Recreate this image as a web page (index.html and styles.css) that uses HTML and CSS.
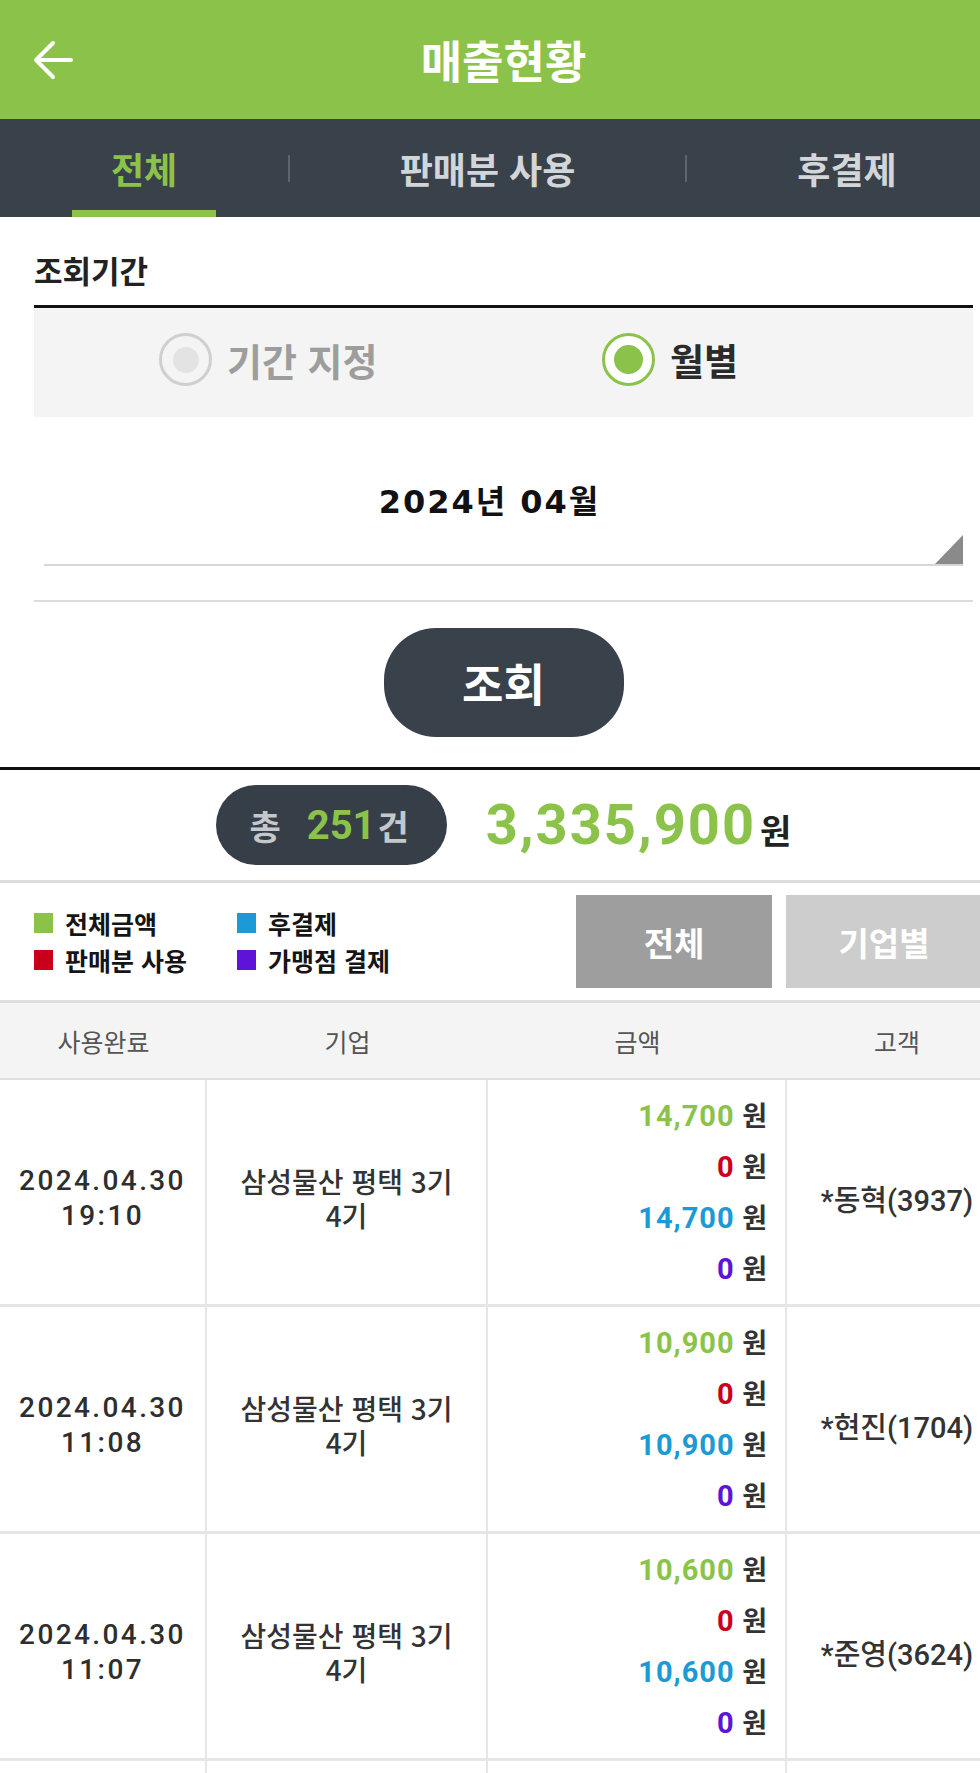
FILE: index.html
```html
<!DOCTYPE html>
<html lang="ko">
<head>
<meta charset="utf-8">
<title>매출현황</title>
<link rel="stylesheet" href="styles.css">
</head>
<body>
<div class="page">
  <header class="topbar">
    <svg class="back" viewBox="0 0 40 40" width="40" height="40" aria-hidden="true">
      <path d="M3 20H38M20 3L3 20L20 37" fill="none" stroke="#fff" stroke-width="4" stroke-linecap="round" stroke-linejoin="round"/>
    </svg>
    <h1 class="title">매출현황</h1>
    <span class="topbar-space"></span>
  </header>

  <nav class="tabs">
    <div class="tab tab-all active"><span class="tab-label">전체</span><span class="tab-bar"></span></div>
    <span class="tab-div"></span>
    <div class="tab tab-sale"><span class="tab-label">판매분 사용</span><span class="tab-bar"></span></div>
    <span class="tab-div"></span>
    <div class="tab tab-post"><span class="tab-label">후결제</span><span class="tab-bar"></span></div>
  </nav>

  <section class="search">
    <div class="search-label">조회기간</div>
    <div class="radio-box">
      <div class="opt opt-range"><span class="radio"><span class="dot"></span></span><span class="opt-text">기간 지정</span></div>
      <div class="opt opt-month on"><span class="radio"><span class="dot"></span></span><span class="opt-text">월별</span></div>
    </div>
    <div class="month-select"><span class="month-text">2024년 04월</span></div>
    <div class="sep"></div>
    <div class="btn-row"><button class="search-btn">조회</button></div>
  </section>

  <div class="rule-black"></div>

  <div class="summary">
    <div class="count-pill"><span class="pill-lbl">총</span><span class="pill-num">251</span><span class="pill-unit">건</span></div>
    <div class="total"><span class="total-num">3,335,900</span><span class="total-unit">원</span></div>
  </div>

  <div class="rule-gray"></div>

  <div class="legend-row">
    <div class="legend">
      <div class="lg"><span class="sq sq-green"></span>전체금액</div>
      <div class="lg"><span class="sq sq-blue"></span>후결제</div>
      <div class="lg"><span class="sq sq-red"></span>판매분 사용</div>
      <div class="lg"><span class="sq sq-purple"></span>가맹점 결제</div>
    </div>
    <div class="view-btns">
      <button class="vbtn vbtn-all">전체</button>
      <button class="vbtn vbtn-corp">기업별</button>
    </div>
  </div>

  <div class="table">
    <div class="thead">
      <div class="th">사용완료</div>
      <div class="th">기업</div>
      <div class="th">금액</div>
      <div class="th">고객</div>
    </div>

    <div class="tr">
      <div class="td td-date"><span>2024.04.30</span><span>19:10</span></div>
      <div class="td td-corp">삼성물산 평택 3기 4기</div>
      <div class="td td-amt">
        <div class="amt"><b class="c-green">14,700</b> 원</div>
        <div class="amt"><b class="c-red">0</b> 원</div>
        <div class="amt"><b class="c-blue">14,700</b> 원</div>
        <div class="amt"><b class="c-purple">0</b> 원</div>
      </div>
      <div class="td td-cust">*동혁(3937)</div>
    </div>

    <div class="tr">
      <div class="td td-date"><span>2024.04.30</span><span>11:08</span></div>
      <div class="td td-corp">삼성물산 평택 3기 4기</div>
      <div class="td td-amt">
        <div class="amt"><b class="c-green">10,900</b> 원</div>
        <div class="amt"><b class="c-red">0</b> 원</div>
        <div class="amt"><b class="c-blue">10,900</b> 원</div>
        <div class="amt"><b class="c-purple">0</b> 원</div>
      </div>
      <div class="td td-cust">*현진(1704)</div>
    </div>

    <div class="tr">
      <div class="td td-date"><span>2024.04.30</span><span>11:07</span></div>
      <div class="td td-corp">삼성물산 평택 3기 4기</div>
      <div class="td td-amt">
        <div class="amt"><b class="c-green">10,600</b> 원</div>
        <div class="amt"><b class="c-red">0</b> 원</div>
        <div class="amt"><b class="c-blue">10,600</b> 원</div>
        <div class="amt"><b class="c-purple">0</b> 원</div>
      </div>
      <div class="td td-cust">*준영(3624)</div>
    </div>

    <div class="tr tr-tail">
      <div class="td"></div>
      <div class="td"></div>
      <div class="td"></div>
      <div class="td"></div>
    </div>
  </div>
</div>
</body>
</html>
```

FILE: styles.css
```css
html, body {
  margin: 0;
  padding: 0;
  background: #fff;
  overflow: hidden;
}
body {
  font-family: "Noto Sans CJK KR", "Noto Sans", sans-serif;
  color: #222;
}
.page {
  width: 1007px;
  height: 1773px;
  overflow: hidden;
}

/* top bar */
.topbar {
  height: 119px;
  background: #8bc34a;
  display: grid;
  grid-template-columns: 1fr auto 1fr;
  align-items: center;
}
.back {
  justify-self: start;
  margin-left: 33px;
  display: block;
}
.title {
  margin: 0;
  font-size: 45px;
  font-weight: 700;
  color: #fff;
  line-height: 119px;
}

/* tabs */
.tabs {
  height: 98px;
  background: #39414a;
  display: flex;
  align-items: stretch;
}
.tab {
  display: flex;
  flex-direction: column;
  align-items: center;
}
.tab-all { width: 288px; }
.tab-sale { width: 395px; }
.tab-post { flex: 1; }
.tab-label {
  flex: 1;
  display: flex;
  align-items: center;
  padding-top: 6px;
  font-size: 36px;
  font-weight: 700;
  color: #d3d6d9;
}
.tab-bar {
  width: 144px;
  height: 7px;
  background: transparent;
}
.tab.active .tab-label { color: #8bc34a; }
.tab.active .tab-bar { background: #8bc34a; }
.tab-div {
  align-self: center;
  width: 2px;
  height: 27px;
  background: #5d646c;
  margin-top: 1px;
}

/* search area */
.search {
  padding: 0 34px 30px;
}
.search-label {
  padding-top: 36px;
  line-height: 34px;
  font-size: 31px;
  font-weight: 700;
  color: #222;
}
.radio-box {
  margin-top: 18px;
  border-top: 3px solid #111;
  background: #f4f4f4;
  height: 109px;
  display: flex;
  align-items: center;
  padding-left: 125px;
}
.opt {
  display: flex;
  align-items: center;
  gap: 15px;
  margin-top: -6px;
}
.opt-range { width: 443px; }
.radio {
  width: 53px;
  height: 53px;
  box-sizing: border-box;
  border-radius: 50%;
  border: 3px solid #cfcfcf;
  display: flex;
  align-items: center;
  justify-content: center;
}
.dot {
  width: 26px;
  height: 26px;
  border-radius: 50%;
  background: #e3e3e3;
}
.opt-text {
  font-size: 38px;
  font-weight: 700;
  color: #9d9d9d;
}
.opt.on .radio {
  border-color: #8bc34a;
  background: #fff;
}
.opt.on .dot {
  width: 29px;
  height: 29px;
  background: #8bc34a;
}
.opt.on .opt-text {
  color: #2b2b2b;
  font-size: 37px;
}

.month-select {
  position: relative;
  margin: 0 10px;
  height: 130px;
  padding-top: 17px;
  padding-right: 28px;
  border-bottom: 2px solid #d6d6d6;
  display: flex;
  align-items: center;
  justify-content: center;
}
.month-select::after {
  content: "";
  position: absolute;
  right: 0;
  bottom: 0;
  width: 28px;
  height: 29px;
  background: #8a8a8a;
  clip-path: polygon(100% 0, 100% 100%, 0 100%);
}
.month-text {
  font-family: "DejaVu Sans", "Noto Sans CJK KR", sans-serif;
  font-size: 32px;
  font-weight: 700;
  color: #111;
  letter-spacing: 2px;
}
.sep {
  margin-top: 34px;
  height: 2px;
  background: #dcdcdc;
}
.btn-row {
  display: flex;
  justify-content: center;
  margin-top: 26px;
}
.search-btn {
  width: 240px;
  height: 109px;
  border: 0;
  border-radius: 52px;
  background: #39414a;
  color: #fff;
  font-family: "Noto Sans CJK KR", sans-serif;
  font-size: 45px;
  font-weight: 700;
  padding: 0;
}

.rule-black {
  height: 3px;
  background: #111;
}

/* summary */
.summary {
  height: 110px;
  display: flex;
  align-items: center;
  justify-content: center;
}
.count-pill {
  width: 231px;
  height: 80px;
  border-radius: 40px;
  background: #363e47;
  display: flex;
  align-items: center;
  justify-content: center;
  padding-right: 4px;
  box-sizing: border-box;
}
.pill-lbl, .pill-unit {
  font-size: 34px;
  font-weight: 700;
  color: #c4c7cb;
}
.pill-num {
  font-family: Roboto, "Noto Sans CJK KR", sans-serif;
  font-size: 40px;
  font-weight: 700;
  color: #8bc34a;
  margin-left: 26px;
  margin-right: 2px;
}
.total {
  margin-left: 39px;
  display: flex;
  align-items: baseline;
}
.total-num {
  font-family: Roboto, "Noto Sans CJK KR", sans-serif;
  font-size: 56px;
  font-weight: 700;
  color: #8bc34a;
  letter-spacing: 2px;
}
.total-unit {
  margin-left: 4px;
  font-size: 34px;
  font-weight: 700;
  color: #222;
}

.rule-gray {
  height: 3px;
  background: #dedede;
}

/* legend + view buttons */
.legend-row {
  height: 117px;
  display: flex;
  align-items: center;
  justify-content: space-between;
  padding: 0 25px 0 34px;
}
.legend {
  display: grid;
  grid-template-columns: 203px auto;
}
.lg {
  display: flex;
  align-items: center;
  font-size: 25px;
  font-weight: 700;
  color: #151515;
  line-height: 37px;
}
.sq {
  width: 19px;
  height: 20px;
  margin-right: 12px;
}
.sq-green { background: #8bc34a; }
.sq-red { background: #c8001e; }
.sq-blue { background: #1b9ad6; }
.sq-purple { background: #5d14d8; }
.view-btns {
  display: flex;
  gap: 14px;
}
.vbtn {
  width: 196px;
  height: 93px;
  border: 0;
  padding: 0;
  color: #fff;
  font-family: "Noto Sans CJK KR", sans-serif;
  font-size: 33px;
  font-weight: 700;
}
.vbtn-all { background: #9e9e9e; }
.vbtn-corp { background: #cdcdcd; }

/* table */
.table {
  border-top: 3px solid #dedede;
}
.thead, .tr {
  display: grid;
  grid-template-columns: 207px 281px 299px 220px;
}
.thead {
  height: 75px;
  background: #f4f4f4;
  border-bottom: 2px solid #dedede;
}
.th {
  display: flex;
  align-items: center;
  justify-content: center;
  font-size: 25px;
  color: #555;
}
.tr {
  height: 227px;
  border-bottom: 3px solid #e6e6e6;
  box-sizing: border-box;
}
.tr-tail {
  height: 40px;
}
.td {
  box-sizing: border-box;
  border-right: 2px solid #e6e6e6;
  display: flex;
  flex-direction: column;
  align-items: center;
  justify-content: center;
  text-align: center;
  color: #333;
}
.td:last-child { border-right: 0; }
.td-date, .td-corp, .td-cust {
  padding-top: 12px;
}
.td-date {
  font-family: Roboto, "Noto Sans CJK KR", sans-serif;
  font-size: 28px;
  font-weight: 500;
  letter-spacing: 2.4px;
  line-height: 35px;
  color: #2e2e2e;
}
.td-corp {
  padding-left: 25px;
  padding-right: 25px;
  font-size: 28px;
  font-weight: 500;
  line-height: 34px;
  word-break: keep-all;
}
.td-amt {
  align-items: flex-end;
  padding-right: 18px;
}
.amt {
  line-height: 50px;
  font-size: 27px;
  font-weight: 700;
  color: #333;
}
.amt b {
  font-family: Roboto, "Noto Sans CJK KR", sans-serif;
  font-size: 29px;
  font-weight: 700;
  letter-spacing: 1px;
}
.c-green { color: #8bc34a; }
.c-red { color: #c8001e; }
.c-blue { color: #1b9ad6; }
.c-purple { color: #5d14d8; }
.td-cust {
  font-family: Roboto, "Noto Sans CJK KR", sans-serif;
  font-size: 29px;
  font-weight: 500;
  color: #333;
}
```
